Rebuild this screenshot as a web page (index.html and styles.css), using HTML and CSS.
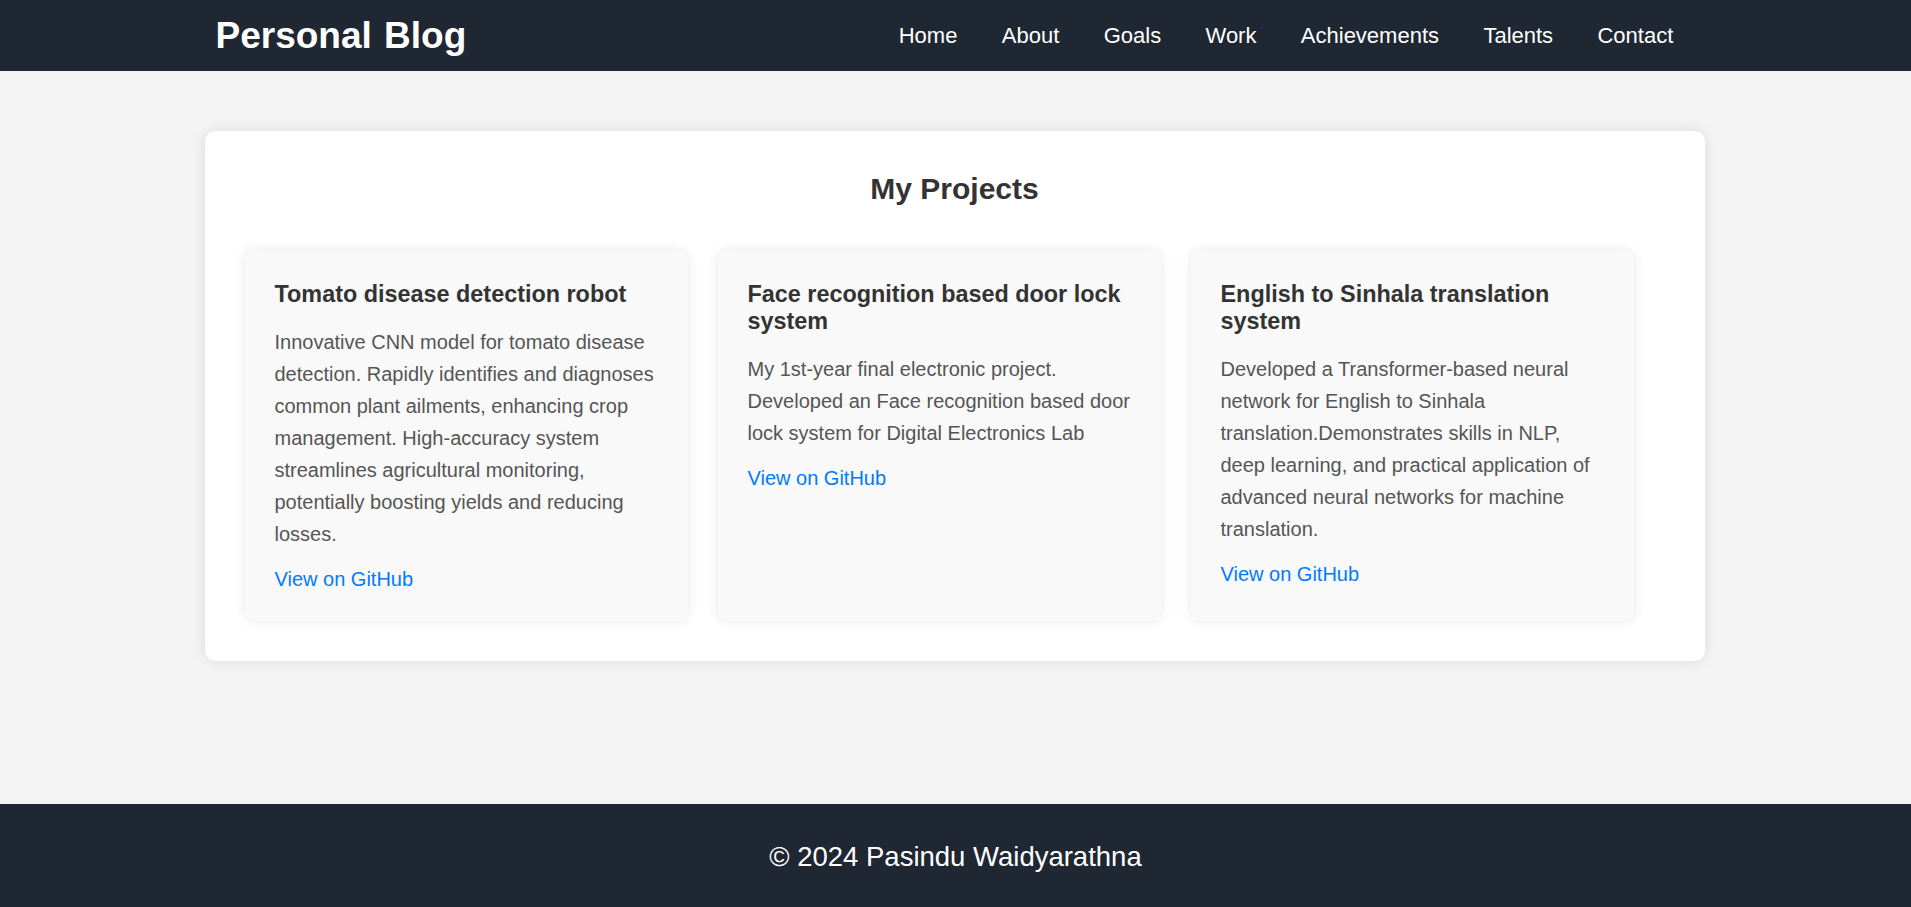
FILE: index.html
```html
<!DOCTYPE html>
<html lang="en">
<head>
<meta charset="utf-8">
<title>Personal Blog</title>
<link rel="stylesheet" href="styles.css">
</head>
<body>
<header class="site-header">
  <div class="header-inner">
    <h1 class="logo">Personal Blog</h1>
    <nav class="nav">
      <a href="#">Home</a>
      <a href="#">About</a>
      <a href="#">Goals</a>
      <a href="#">Work</a>
      <a href="#">Achievements</a>
      <a href="#">Talents</a>
      <a href="#">Contact</a>
    </nav>
  </div>
</header>
<main class="main">
  <section class="panel">
    <h2 class="panel-title">My Projects</h2>
    <div class="projects">
      <article class="project">
        <h3>Tomato disease detection robot</h3>
        <p>Innovative CNN model for tomato disease detection. Rapidly identifies and diagnoses common plant ailments, enhancing crop management. High-accuracy system streamlines agricultural monitoring, potentially boosting yields and reducing losses.</p>
        <a href="#" class="gh">View on GitHub</a>
      </article>
      <article class="project">
        <h3>Face recognition based door lock system</h3>
        <p>My 1st-year final electronic project. Developed an Face recognition based door lock system for Digital Electronics Lab</p>
        <a href="#" class="gh">View on GitHub</a>
      </article>
      <article class="project">
        <h3>English to Sinhala translation system</h3>
        <p>Developed a Transformer-based neural network for English to Sinhala translation.Demonstrates skills in NLP, deep learning, and practical application of advanced neural networks for machine translation.</p>
        <a href="#" class="gh">View on GitHub</a>
      </article>
    </div>
  </section>
</main>
<footer class="site-footer">
  <p>&copy; 2024 Pasindu Waidyarathna</p>
</footer>
</body>
</html>
```
FILE: styles.css
```css
* { box-sizing: border-box; }

html, body { margin: 0; padding: 0; }

body {
  font-family: "Liberation Sans", Arial, sans-serif;
  background: #f4f4f4;
  color: #333;
  min-height: 100vh;
  display: flex;
  flex-direction: column;
}

.site-header {
  background: #1f2733;
  color: #fff;
}

.header-inner {
  max-width: 1500px;
  margin: 0 auto;
  padding: 0 10px 0 10px;
  height: 71px;
  display: flex;
  align-items: center;
  justify-content: space-between;
}

.logo {
  margin: 0;
  font-size: 37px;
  font-weight: bold;
  word-spacing: 2px;
}

.nav {
  display: flex;
  align-items: center;
}

.nav a {
  color: #fff;
  text-decoration: none;
  font-size: 22px;
  padding: 0 22.2px;
}

.main {
  flex: 1;
  padding: 60px 0;
}

.panel {
  max-width: 1500px;
  margin: 0 auto;
  background: #fff;
  border-radius: 10px;
  padding: 40px;
  box-shadow: 0 0 15px rgba(0, 0, 0, 0.1);
  position: relative;
  left: -1px;
}

.panel-title {
  margin: 1px 0 44px;
  text-align: center;
  font-size: 30px;
  color: #333;
}

.projects {
  display: grid;
  grid-template-columns: repeat(3, 443px);
  gap: 30px;
}

.project {
  background: #f9f9f9;
  border-radius: 10px;
  padding: 31px 30px 30px;
  box-shadow: 0 0 12px rgba(0, 0, 0, 0.1);
}

.project h3 {
  margin: 0 0 18px;
  font-size: 23.4px;
  color: #333;
}

.project p {
  margin: 0 0 18px;
  font-size: 20px;
  line-height: 32px;
  color: #555;
}

.gh {
  display: inline-block;
  font-size: 20px;
  color: #007bff;
  text-decoration: none;
}

.site-footer {
  background: #1f2733;
  color: #fff;
  text-align: center;
  height: 103px;
  display: flex;
  align-items: center;
  justify-content: center;
}

.site-footer p {
  margin: 2px 0 0;
  font-size: 27.5px;
}
```
